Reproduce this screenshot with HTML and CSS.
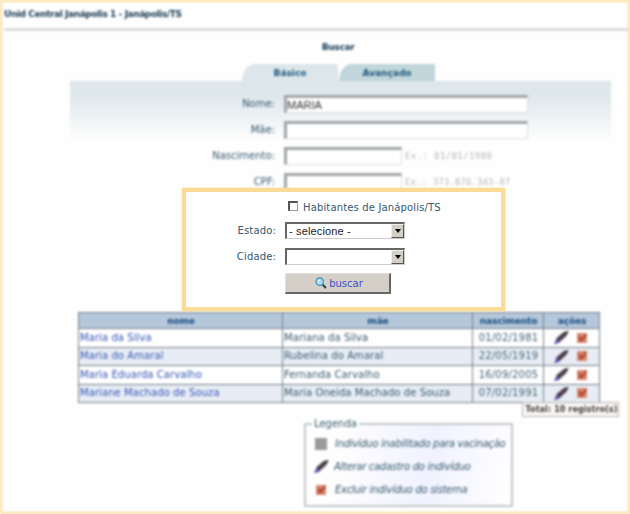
FILE: index.html
```
<!DOCTYPE html>
<html lang="pt-BR">
<head>
<meta charset="utf-8">
<title>Buscar</title>
<link rel="stylesheet" href="styles.css">
</head>
<body>
<svg class="defs" width="0" height="0">
  <symbol id="pen" viewBox="0 0 18 16"><path d="M1 15L4 8L11 2L17 1L14 7L6 14Z" fill="#75697a"/><path d="M1 15L4 10L8 7L6 13Z" fill="#655cd9"/><path d="M5 11L15 2" stroke="#3f3238" stroke-width="2.4"/></symbol>
  <symbol id="del" viewBox="0 0 12 12"><rect x="1" y="1" width="10" height="10" fill="#d58c74"/><path d="M3 4L6 8L10 2M3 9L9 5" stroke="#b4442c" stroke-width="2" fill="none"/></symbol>
</svg>
<main class="page">
  <header class="top">Unid Central Janápolis 1 - Janápolis/TS</header>
  <h1 class="title">Buscar</h1>
  <nav class="tabs"><span class="tab">Básico</span><span class="tab next">Avançado</span></nav>
  <section class="panel">
    <div class="row"><label>Nome:</label><span class="field">MARIA</span></div>
    <div class="row"><label>Mãe:</label><span class="field"></span></div>
    <div class="row"><label>Nascimento:</label><span class="field short"></span><span class="hint">Ex.: 01/01/1980</span></div>
    <div class="row"><label>CPF:</label><span class="field short"></span><span class="hint tight">Ex.: 373.876.343-87</span></div>
  </section>
  <table class="results">
    <colgroup><col class="c1"><col class="c2"><col class="c3"><col class="c4"></colgroup>
    <tr><th>nome</th><th>mãe</th><th>nascimento</th><th>ações</th></tr>
    <tr><td class="link">Maria da Silva</td><td>Mariana da Silva</td><td class="date">01/02/1981</td><td><div class="acts"><svg class="pen"><use href="#pen"/></svg><svg class="del"><use href="#del"/></svg></div></td></tr>
    <tr><td class="link">Maria do Amaral</td><td>Rubelina do Amaral</td><td class="date">22/05/1919</td><td><div class="acts"><svg class="pen"><use href="#pen"/></svg><svg class="del"><use href="#del"/></svg></div></td></tr>
    <tr><td class="link">Maria Eduarda Carvalho</td><td>Fernanda Carvalho</td><td class="date">16/09/2005</td><td><div class="acts"><svg class="pen"><use href="#pen"/></svg><svg class="del"><use href="#del"/></svg></div></td></tr>
    <tr><td class="link">Mariane Machado de Souza</td><td>Maria Oneida Machado de Souza</td><td class="date">07/02/1991</td><td><div class="acts"><svg class="pen"><use href="#pen"/></svg><svg class="del"><use href="#del"/></svg></div></td></tr>
  </table>
  <div class="total">Total: 10 registro(s)</div>
  <section class="legend">
    <span class="caption">Legenda</span>
    <div class="item"><i class="off"></i><em>Indivíduo inabilitado para vacinação</em></div>
    <div class="item"><svg class="pen"><use href="#pen"/></svg><em>Alterar cadastro do indivíduo</em></div>
    <div class="item"><svg class="del"><use href="#del"/></svg><em>Excluir indivíduo do sistema</em></div>
  </section>
</main>
<form class="focus">
  <div class="line check"><i class="box"></i><span class="hab">Habitantes de Janápolis/TS</span></div>
  <div class="line"><label>Estado:</label><span class="select"><span>- selecione -</span><b class="arrow"></b></span></div>
  <div class="line"><label>Cidade:</label><span class="select"><span></span><b class="arrow"></b></span></div>
  <button class="search" type="button"><svg width="12" height="12" viewBox="0 0 12 12"><path d="M7.5 7.5L11 11" stroke="#314858" stroke-width="2.2"/><circle cx="4.7" cy="4.7" r="3.7" fill="#a9dcf2" stroke="#4b93b8" stroke-width="1.3"/><path d="M3 4.5Q3.3 3 5 3" stroke="#fff" fill="none"/></svg>buscar</button>
</form>
</body>
</html>
```

FILE: styles.css
```
* { box-sizing: border-box; }
body { margin: 0; width: 630px; height: 514px; overflow: hidden; position: relative; background: #fff; font-family: "DejaVu Sans", sans-serif; font-size: 10px; color: #35596e; }
.defs { position: absolute; }
.page { width: 630px; height: 514px; filter: blur(1.15px); background: #fefefe; border: 2px solid #fbdc96; }
.top { height: 29px; margin-left: 2px; border-bottom: 3px solid #dcdcdc; font-weight: bold; font-size: 9px; line-height: 24px; letter-spacing: -0.42px; color: #183c55; white-space: nowrap; }
.title { margin: 10px 0 0; padding-left: 46px; text-align: center; font-size: 9px; line-height: 13px; height: 23px; color: #183c55; letter-spacing: -.3px; }
.tabs { display: flex; gap: 1px; margin-left: 240px; height: 17px; }
.tab { width: 96px; background: #dde6ea; border-top-left-radius: 13px 17px; text-align: center; font-size: 9px; font-weight: bold; line-height: 19px; color: #1f577d; }
.next { background: #c0d6da; }
.panel { width: 541px; height: 231px; margin-left: 68px; padding-top: 14px; background: linear-gradient(#dde6ea 0, #dfe8ec 15px, #fefefe 60px); }
.row { display: flex; height: 26px; }
.row label { width: 205px; margin-right: 9px; text-align: right; line-height: 18px; }
.field { width: 244px; height: 18px; border: 1px solid #dedede; border-top: 3px solid #a3a6a8; border-left: 3px solid #a3a6a8; background: #fff; font: 11px/14px "Liberation Sans", sans-serif; color: #333; }
.short { width: 118px; }
.hint { margin-left: 3px; font: 9px/19px "DejaVu Sans Mono", monospace; color: #b8b8b8; letter-spacing: .4px; }
.tight { letter-spacing: .12px; }
.results { table-layout: fixed; width: 522px; margin-left: 76px; border-collapse: collapse; letter-spacing: .08px; }
.c1 { width: 204px; } .c2 { width: 190px; } .c3 { width: 71px; } .c4 { width: 56px; }
.results th, .results td { border: 1px solid #77818b; padding: 0 0 0 1px; white-space: nowrap; }
.results th { height: 16px; background: #b5c7da; color: #174b80; font-size: 9px; line-height: 14px; letter-spacing: -.1px; }
.results td { height: 18.5px; line-height: 16px; }
.results tr:nth-child(odd) td { background: #e8edf5; }
.results .link { color: #3556b5; }
.results .date { text-align: center; color: #456478; letter-spacing: .2px; }
.acts { display: flex; align-items: center; justify-content: center; gap: 6px; height: 16px; }
.acts .pen { margin-left: -3px; }
.pen { width: 17px; height: 15px; } .del { width: 12px; height: 12px; }
.total { width: 97px; height: 15px; margin: -1px 0 0 520px; padding-left: 2px; border: 1px solid #b7b3b0; background: #faf8f7; font-weight: bold; font-size: 8px; line-height: 13px; letter-spacing: .1px; text-align: center; color: #433936; white-space: nowrap; }
.legend { position: relative; width: 209px; height: 84px; margin: 6px 0 0 302px; padding: 7px 0 0 8px; border: 2px solid #c3c7c9; background: linear-gradient(100deg, #fefefe 15%, #f1f2ff 60%, #fff); }
.caption { position: absolute; left: 6px; top: -8px; padding: 0 2px; background: #fefefe; line-height: 13px; }
.item { display: flex; align-items: center; height: 23px; white-space: nowrap; letter-spacing: -.3px; }
.item > :first-child { flex: none; }
.off { width: 12px; height: 12px; background: #9b9b9b; margin: 0 8px 0 1px; }
.item .pen { margin: 0 4px 0 -1px; } .item .del { margin: 0 8px 0 1px; }
.focus { position: absolute; left: 182px; top: 188px; width: 323px; height: 123px; border: 4px solid #fbdc96; background: #fefefe; padding-top: 5px; box-shadow: 0 0 2px #fbdc96; }
.line { display: flex; align-items: center; height: 26px; letter-spacing: .15px; }
.line label { width: 90px; text-align: right; margin-right: 9px; }
.check { height: 20px; padding-left: 102px; }
.box { width: 10px; height: 10px; margin-top: -3px; border: 1px solid #999; border-top: 2px solid #555; border-left: 2px solid #555; }
.hab { margin-left: 5px; white-space: nowrap; }
.select { display: flex; justify-content: space-between; width: 120px; height: 17px; border: 1px solid #ccc; border-top: 2px solid #666; border-left: 2px solid #666; background: #fff; font: 11px/15px "Liberation Sans", sans-serif; color: #222; padding-left: 2px; }
.arrow { width: 13px; height: 14px; background: #d4d0c8; border: 1px solid #eee; border-right-color: #555; border-bottom-color: #555; display: flex; align-items: center; justify-content: center; }
.arrow::after { content: ""; border: 3px solid transparent; border-top: 4px solid #000; border-bottom: 0; }
.search { display: flex; align-items: center; justify-content: center; gap: 2px; width: 106px; height: 21px; margin: 4px 0 0 99px; padding: 0 0 0 3px; border: 1px solid #e4e1db; border-right: 2px solid #666; border-bottom: 2px solid #666; background: #d4d0c8; color: #3b4fc9; font: 10px "DejaVu Sans", sans-serif; }
```
